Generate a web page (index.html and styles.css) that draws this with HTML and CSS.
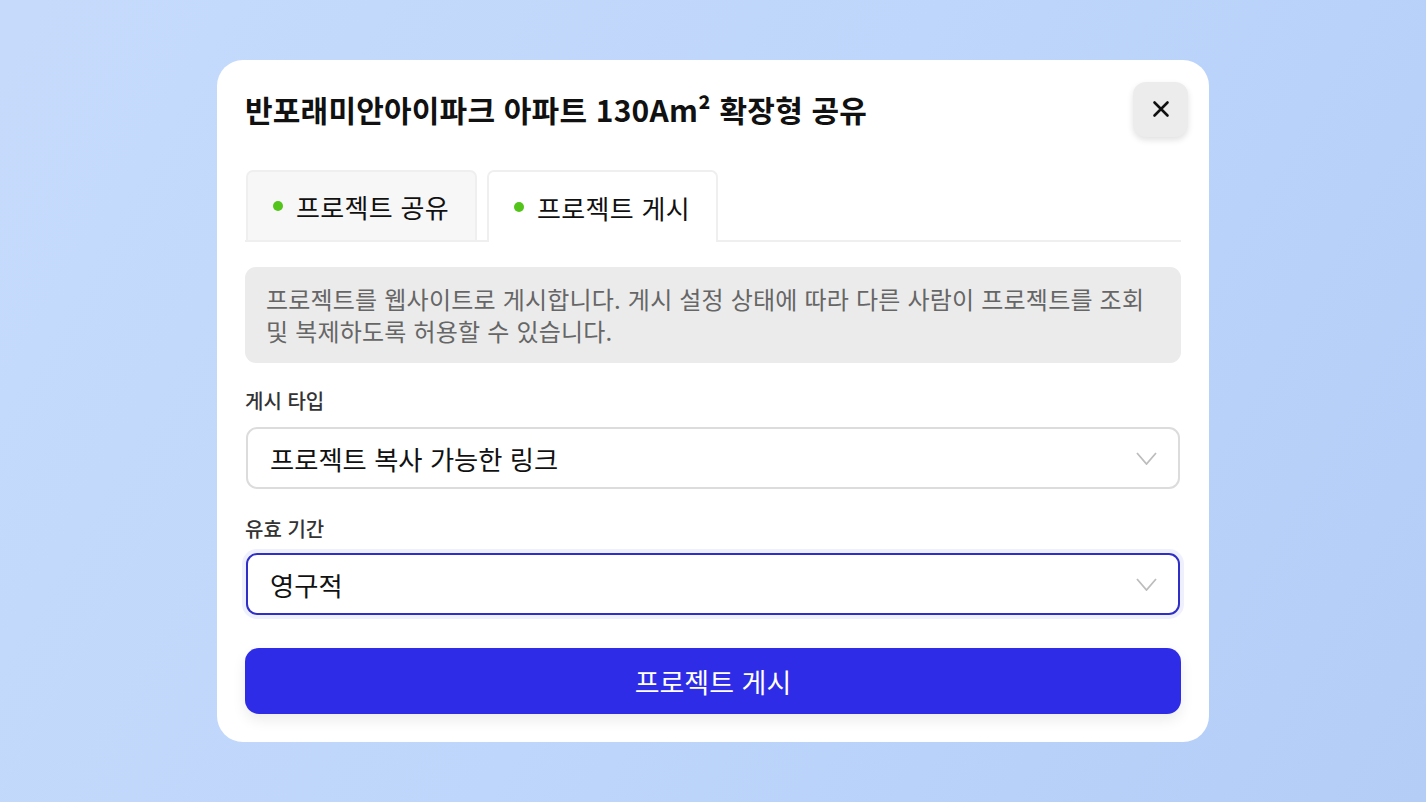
FILE: index.html
```html
<!DOCTYPE html>
<html lang="ko">
<head>
<meta charset="utf-8">
<title>공유</title>
<link rel="stylesheet" href="styles.css">
</head>
<body>
<div class="modal">
  <div class="header">
    <h1 class="title">반포래미안아이파크 아파트 130Am² 확장형 공유</h1>
    <button class="close" aria-label="닫기">
      <svg width="20" height="20" viewBox="0 0 20 20"><path d="M3.5 3.5 L16.5 16.5 M16.5 3.5 L3.5 16.5" stroke="#111" stroke-width="2.6" stroke-linecap="round"/></svg>
    </button>
  </div>
  <div class="tabs">
    <div class="tab"><span class="dot"></span><span>프로젝트 공유</span></div>
    <div class="tab active"><span class="dot"></span><span>프로젝트 게시</span></div>
  </div>
  <div class="info">프로젝트를 웹사이트로 게시합니다. 게시 설정 상태에 따라 다른 사람이 프로젝트를 조회 및 복제하도록 허용할 수 있습니다.</div>
  <div class="label">게시 타입</div>
  <div class="select">
    <span>프로젝트 복사 가능한 링크</span>
    <svg class="chev" width="21" height="13" viewBox="0 0 21 13"><path d="M1 1 L10.5 12 L20 1" fill="none" stroke="#bdbdbd" stroke-width="1.8"/></svg>
  </div>
  <div class="label second">유효 기간</div>
  <div class="select focused">
    <span>영구적</span>
    <svg class="chev" width="21" height="13" viewBox="0 0 21 13"><path d="M1 1 L10.5 12 L20 1" fill="none" stroke="#bdbdbd" stroke-width="1.8"/></svg>
  </div>
  <button class="primary">프로젝트 게시</button>
</div>
</body>
</html>
```
FILE: styles.css
```css
* { box-sizing: border-box; }
html, body { margin: 0; height: 100%; }
body {
  font-family: "Noto Sans CJK KR", "Noto Sans", sans-serif;
  background: linear-gradient(120deg, #c6dbfc 0%, #bed6fb 50%, #b3cdf7 100%);
  display: flex;
  align-items: center;
  justify-content: center;
}
.modal {
  width: 992px;
  background: #fff;
  border-radius: 26px;
  padding: 22px 28px 28px 28px;
  display: flex;
  flex-direction: column;
}
.header {
  display: flex;
  align-items: center;
  justify-content: space-between;
  height: 54px;
}
.title {
  margin: 0;
  font-size: 30px;
  font-weight: 700;
  color: #111;
  letter-spacing: 0.2px;
  line-height: 40px;
}
.close {
  width: 55px;
  height: 55px;
  margin-right: -7px;
  border: none;
  border-radius: 13px;
  background: #ececec;
  box-shadow: 0 3px 6px rgba(0,0,0,0.12);
  display: flex;
  align-items: center;
  justify-content: center;
  padding: 0;
}
.tabs {
  margin-top: 34px;
  display: flex;
  gap: 10px;
  border-bottom: 2px solid #efefef;
  padding-left: 1px;
}
.tab {
  width: 231px;
  height: 70px;
  display: flex;
  align-items: center;
  gap: 13px;
  padding-left: 25px;
  background: #f7f7f7;
  border: 2px solid #efefef;
  border-bottom: none;
  border-radius: 7px 7px 0 0;
  font-size: 26px;
  letter-spacing: 0.3px;
  color: #111;
  margin-bottom: -2px;
}
.tab.active {
  background: #fff;
  height: 72px;
}
.dot {
  width: 10px;
  height: 10px;
  border-radius: 50%;
  background: #52c41a;
  flex: none;
}
.info {
  margin-top: 25px;
  background: #ebebeb;
  border-radius: 11px;
  padding: 16px 21px;
  font-size: 24px;
  letter-spacing: 0.2px;
  line-height: 32px;
  color: #666;
}
.label {
  margin-top: 26px;
  margin-bottom: 14px;
  font-size: 20px;
  line-height: 24px;
  font-weight: 500;
  color: #333;
}
.label.second {
  margin-top: 28px;
  margin-bottom: 12px;
}
.select {
  height: 62px;
  margin: 0 1px;
  border: 2px solid #dcdcdc;
  border-radius: 11px;
  display: flex;
  align-items: center;
  justify-content: space-between;
  padding: 0 21px 0 22px;
  font-size: 26.3px;
  color: #111;
}
.select.focused {
  border-color: #2f2fc8;
  box-shadow: 0 0 0 4px #eef0fd;
}
.chev { flex: none; }
.primary {
  margin-top: 33px;
  height: 66px;
  border: none;
  border-radius: 14px;
  background: #2e2ce6;
  color: #fff;
  font-family: inherit;
  font-size: 27px;
  box-shadow: 0 6px 14px rgba(0,0,0,0.08);
}
```
